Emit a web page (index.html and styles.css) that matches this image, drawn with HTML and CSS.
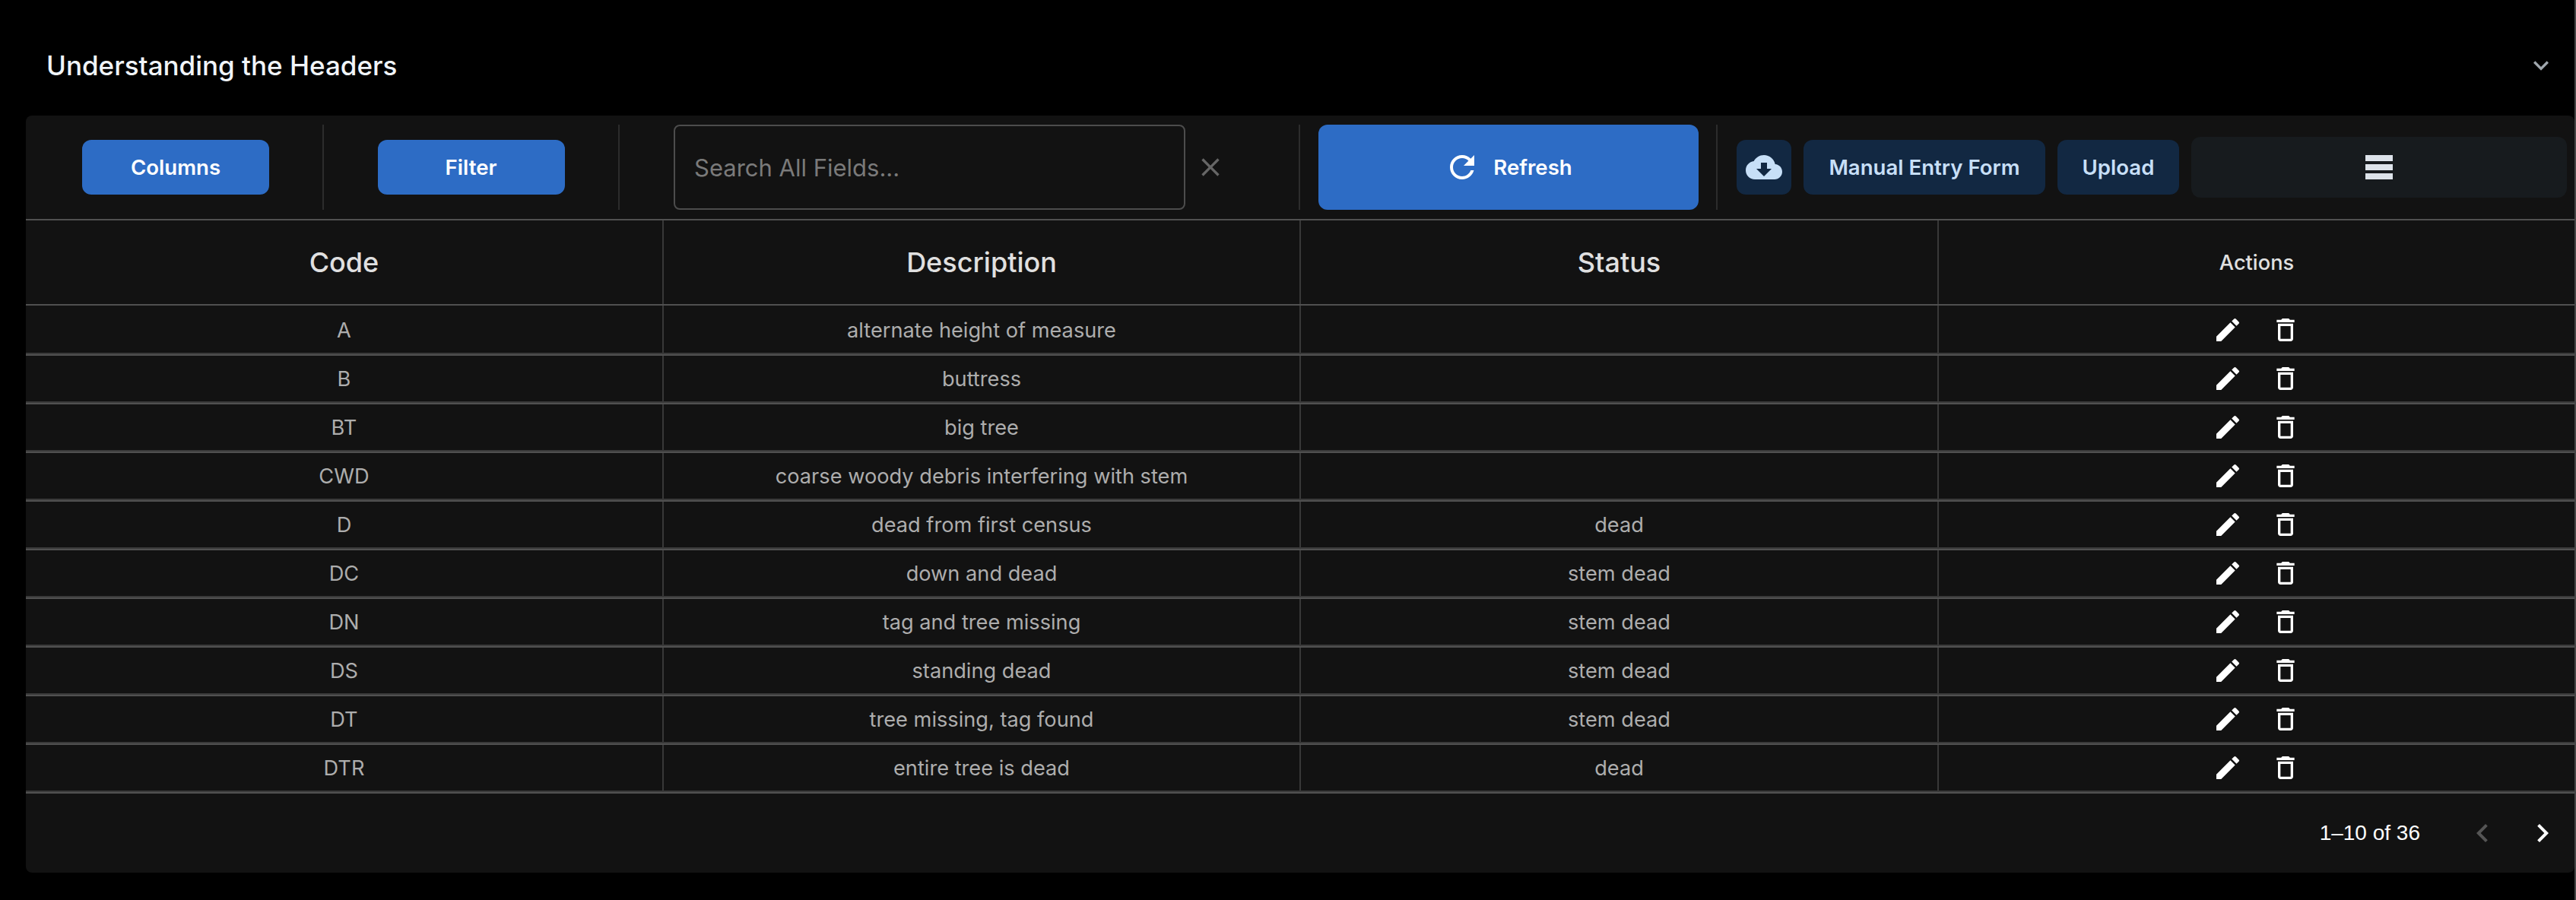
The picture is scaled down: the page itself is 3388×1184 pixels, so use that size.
FILE: index.html
```html
<!DOCTYPE html>
<html lang="en">
<head>
<meta charset="utf-8">
<title>Understanding the Headers</title>
<link rel="stylesheet" href="styles.css">
</head>
<body>
<svg class="defs" aria-hidden="true">
  <symbol id="edit" viewBox="0 0 24 24"><path d="M3 17.25V21h3.75L17.81 9.94l-3.75-3.75zM20.71 7.04a.996.996 0 0 0 0-1.41l-2.34-2.34a.996.996 0 0 0-1.41 0l-1.83 1.83 3.75 3.75z"/></symbol>
  <symbol id="trash" viewBox="0 0 24 24"><path d="M16 9v10H8V9zm-1.5-6h-5l-1 1H5v2h14V4h-3.5zM18 7H6v12c0 1.1.9 2 2 2h8c1.1 0 2-.9 2-2z"/></symbol>
</svg>
<div class="page">
  <header class="accordion">
    <h2 class="title">Understanding the Headers</h2>
    <svg class="expand" viewBox="0 0 24 24"><path d="M7.41 8.59 12 13.17l4.59-4.58L18 10l-6 6-6-6z"/></svg>
  </header>
  <section class="panel">
    <div class="toolbar">
      <div class="tool tool-columns"><button class="btn primary">Columns</button></div>
      <div class="tool tool-filter"><button class="btn primary">Filter</button></div>
      <div class="tool tool-search">
        <div class="search">Search All Fields...</div>
        <svg class="clear" viewBox="0 0 24 24"><path d="M19 6.41 17.59 5 12 10.59 6.41 5 5 6.41 10.59 12 5 17.59 6.41 19 12 13.41 17.59 19 19 17.59 13.41 12z"/></svg>
      </div>
      <div class="tool tool-refresh">
        <button class="btn refresh">
          <svg class="refresh-icon" viewBox="0 0 24 24"><path d="M17.65 6.35C16.2 4.9 14.21 4 12 4c-4.42 0-7.99 3.58-7.99 8s3.57 8 7.99 8c3.73 0 6.84-2.55 7.73-6h-2.08c-.82 2.33-3.04 4-5.65 4-3.31 0-6-2.69-6-6s2.69-6 6-6c1.66 0 3.14.69 4.22 1.78L13 11h7V4z"/></svg>
          Refresh
        </button>
      </div>
      <div class="tool-actions">
        <button class="btn soft icon-btn">
          <svg class="cloud" viewBox="0 0 24 24"><path d="M19.35 10.04C18.67 6.59 15.64 4 12 4 9.11 4 6.6 5.64 5.35 8.04 2.34 8.36 0 10.91 0 14c0 3.31 2.69 6 6 6h13c2.76 0 5-2.24 5-5 0-2.64-2.05-4.78-4.65-4.96zM17 13l-5 5-5-5h3V9h4v4z"/></svg>
        </button>
        <button class="btn soft manual">Manual Entry Form</button>
        <button class="btn soft upload">Upload</button>
        <button class="menu">
          <span class="bars"><i></i><i></i><i></i></span>
        </button>
      </div>
    </div>
    <div class="grid">
      <div class="row head">
        <div class="cell">Code</div><div class="cell">Description</div><div class="cell">Status</div><div class="cell small">Actions</div>
      </div>
      <div class="row"><div class="cell">A</div><div class="cell">alternate height of measure</div><div class="cell"></div><div class="cell acts"><svg class="act"><use href="#edit"/></svg><svg class="act"><use href="#trash"/></svg></div></div>
      <div class="row"><div class="cell">B</div><div class="cell">buttress</div><div class="cell"></div><div class="cell acts"><svg class="act"><use href="#edit"/></svg><svg class="act"><use href="#trash"/></svg></div></div>
      <div class="row"><div class="cell">BT</div><div class="cell">big tree</div><div class="cell"></div><div class="cell acts"><svg class="act"><use href="#edit"/></svg><svg class="act"><use href="#trash"/></svg></div></div>
      <div class="row"><div class="cell">CWD</div><div class="cell">coarse woody debris interfering with stem</div><div class="cell"></div><div class="cell acts"><svg class="act"><use href="#edit"/></svg><svg class="act"><use href="#trash"/></svg></div></div>
      <div class="row"><div class="cell">D</div><div class="cell">dead from first census</div><div class="cell">dead</div><div class="cell acts"><svg class="act"><use href="#edit"/></svg><svg class="act"><use href="#trash"/></svg></div></div>
      <div class="row"><div class="cell">DC</div><div class="cell">down and dead</div><div class="cell">stem dead</div><div class="cell acts"><svg class="act"><use href="#edit"/></svg><svg class="act"><use href="#trash"/></svg></div></div>
      <div class="row"><div class="cell">DN</div><div class="cell">tag and tree missing</div><div class="cell">stem dead</div><div class="cell acts"><svg class="act"><use href="#edit"/></svg><svg class="act"><use href="#trash"/></svg></div></div>
      <div class="row"><div class="cell">DS</div><div class="cell">standing dead</div><div class="cell">stem dead</div><div class="cell acts"><svg class="act"><use href="#edit"/></svg><svg class="act"><use href="#trash"/></svg></div></div>
      <div class="row"><div class="cell">DT</div><div class="cell">tree missing, tag found</div><div class="cell">stem dead</div><div class="cell acts"><svg class="act"><use href="#edit"/></svg><svg class="act"><use href="#trash"/></svg></div></div>
      <div class="row"><div class="cell">DTR</div><div class="cell">entire tree is dead</div><div class="cell">dead</div><div class="cell acts"><svg class="act"><use href="#edit"/></svg><svg class="act"><use href="#trash"/></svg></div></div>
    </div>
    <footer class="pager">
      <span class="count">1–10 of 36</span>
      <svg class="nav off" viewBox="0 0 24 24"><path d="M15.41 7.41 14 6l-6 6 6 6 1.41-1.41L10.83 12z"/></svg>
      <svg class="nav" viewBox="0 0 24 24"><path d="M10 6 8.59 7.41 13.17 12l-4.58 4.59L10 18l6-6z"/></svg>
    </footer>
  </section>
</div>
</body>
</html>
```
FILE: styles.css
```css
* { box-sizing: border-box; }
html, body { margin: 0; height: 100%; background: #000; overflow: hidden; }
body { font-family: Inter, "Liberation Sans", sans-serif; }
.defs { display: none; }
.page { width: 3388px; height: 1184px; padding-left: 34px; border-right: 2px solid #464646; }
.accordion { height: 152px; display: flex; align-items: center; justify-content: space-between; padding: 0 24px 0 27px; }
.title { margin: 0; font-size: 35px; font-weight: 500; line-height: 48px; color: #f0f4f8; transform: translateY(10px); }
.expand { width: 40px; height: 40px; fill: #9fa6ad; transform: translateY(10px); }
.panel { background: #121212; border-radius: 8px; height: 996px; display: flex; flex-direction: column; }
.toolbar { height: 136px; padding-top: 12px; display: flex; align-items: flex-start; }
.tool { height: 112px; display: flex; align-items: center; justify-content: center; border-right: 2px solid #2c2c2c; flex: none; }
.tool-columns { width: 392px; padding-left: 4px; }
.tool-filter { width: 389px; }
.tool-search { width: 895px; padding-left: 71px; justify-content: flex-start; gap: 13px; }
.tool-refresh { width: 549px; }
.tool-actions { display: flex; align-items: center; height: 112px; flex: 1; padding-left: 25px; gap: 16px; }
.btn { border: 0; font-family: inherit; font-size: 27.6px; font-weight: 600; border-radius: 12px; display: flex; align-items: center; justify-content: center; padding: 0; }
.primary { background: #2d6cc5; color: #fff; width: 246px; height: 72px; }
.refresh { background: #2d6cc5; color: #fff; width: 500px; height: 112px; gap: 17px; }
.refresh-icon { width: 48px; height: 48px; fill: #fff; }
.soft { background: #122842; color: #c7dff7; height: 72px; }
.icon-btn { width: 72px; }
.cloud { width: 48px; height: 48px; fill: #c7dff7; }
.manual { width: 318px; }
.upload { width: 160px; }
.menu { border: 0; background: #171b1e; width: 494px; height: 80px; border-radius: 12px; display: flex; align-items: center; justify-content: center; padding: 0; }
.bars { display: flex; flex-direction: column; gap: 4px; width: 36px; }
.bars i { display: block; height: 8px; background: #dde3ea; }
.search { width: 673px; height: 112px; border: 2px solid #4c4c4c; border-radius: 8px; padding-left: 25px; display: flex; align-items: center; font-size: 31px; color: #7a7a7a; }
.clear { width: 40px; height: 40px; fill: #666; }
.grid { border-top: 2px solid #505050; }
.row { display: grid; grid-template-columns: 839px 838px 839px 1fr; height: 64px; border-top: 2px solid #505050; }
.head { height: 112px; border-top: 0; border-bottom: 2px solid #505050; }
.head + .row { border-top: 0; }
.head + .row .cell { padding-top: 2px; }
.cell { display: flex; align-items: center; justify-content: center; font-size: 27.2px; color: #adadad; border-right: 2px solid #383838; border-bottom: 2px solid #3a3a3a; }
.cell:last-child { border-right: 0; }
.head .cell { font-size: 36px; font-weight: 500; color: #e0e0e0; border-bottom: 0; }
.head .small { font-size: 27.2px; }
.acts { gap: 36px; }
.act { width: 40px; height: 40px; fill: #fff; }
.pager { flex: 1; display: flex; align-items: center; justify-content: flex-end; padding-right: 18px; border-top: 2px solid #505050; font-family: "Liberation Sans", sans-serif; font-size: 28px; color: #fff; }
.count { margin-right: 58px; }
.nav { width: 48px; height: 48px; fill: #fff; margin-left: 31px; }
.nav.off { fill: #555; margin-left: 0; }
```
